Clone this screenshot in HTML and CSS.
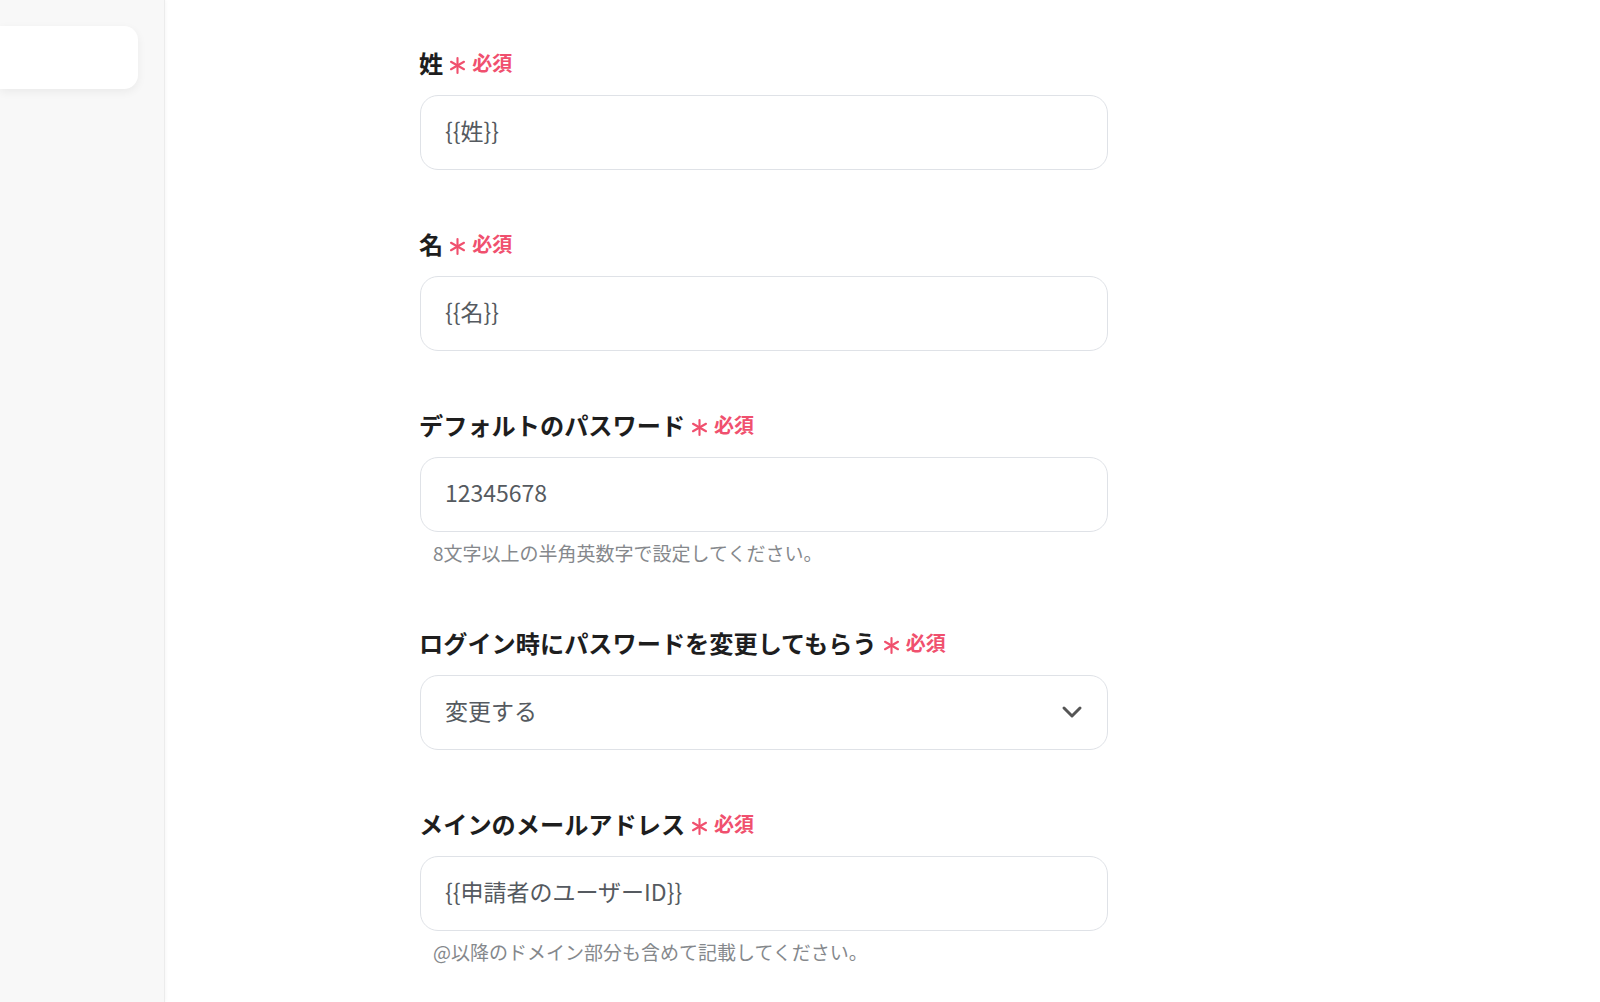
FILE: index.html
```html
<!DOCTYPE html>
<html lang="ja">
<head>
<meta charset="utf-8">
<link rel="stylesheet" href="styles.css">
</head>
<body>
<div class="app">
  <aside class="sidebar">
    <div class="side-card"></div>
  </aside>
  <main class="main">
    <form class="form">
      <div class="field">
        <div class="label">姓<span class="req"><svg class="ast" width="17" height="17" viewBox="0 0 16 16"><g stroke="#f0506e" stroke-width="2" stroke-linecap="round"><path d="M8 1 V15"/><path d="M1.9 4.5 L14.1 11.5"/><path d="M1.9 11.5 L14.1 4.5"/></g></svg>必須</span></div>
        <div class="input">{{姓}}</div>
      </div>
      <div class="field">
        <div class="label">名<span class="req"><svg class="ast" width="17" height="17" viewBox="0 0 16 16"><g stroke="#f0506e" stroke-width="2" stroke-linecap="round"><path d="M8 1 V15"/><path d="M1.9 4.5 L14.1 11.5"/><path d="M1.9 11.5 L14.1 4.5"/></g></svg>必須</span></div>
        <div class="input">{{名}}</div>
      </div>
      <div class="field">
        <div class="label">デフォルトのパスワード<span class="req"><svg class="ast" width="17" height="17" viewBox="0 0 16 16"><g stroke="#f0506e" stroke-width="2" stroke-linecap="round"><path d="M8 1 V15"/><path d="M1.9 4.5 L14.1 11.5"/><path d="M1.9 11.5 L14.1 4.5"/></g></svg>必須</span></div>
        <div class="input">12345678</div>
        <div class="help">8文字以上の半角英数字で設定してください。</div>
      </div>
      <div class="field">
        <div class="label">ログイン時にパスワードを変更してもらう<span class="req"><svg class="ast" width="17" height="17" viewBox="0 0 16 16"><g stroke="#f0506e" stroke-width="2" stroke-linecap="round"><path d="M8 1 V15"/><path d="M1.9 4.5 L14.1 11.5"/><path d="M1.9 11.5 L14.1 4.5"/></g></svg>必須</span></div>
        <div class="input select">
          <span>変更する</span>
          <svg class="chev" width="22" height="14" viewBox="0 0 22 14"><path d="M3 3 L11 11 L19 3" fill="none" stroke="#555" stroke-width="3" stroke-linecap="round" stroke-linejoin="round"/></svg>
        </div>
      </div>
      <div class="field">
        <div class="label">メインのメールアドレス<span class="req"><svg class="ast" width="17" height="17" viewBox="0 0 16 16"><g stroke="#f0506e" stroke-width="2" stroke-linecap="round"><path d="M8 1 V15"/><path d="M1.9 4.5 L14.1 11.5"/><path d="M1.9 11.5 L14.1 4.5"/></g></svg>必須</span></div>
        <div class="input">{{申請者のユーザーID}}</div>
        <div class="help">@以降のドメイン部分も含めて記載してください。</div>
      </div>
    </form>
  </main>
</div>
</body>
</html>
```

FILE: styles.css
```css
html, body {
  margin: 0;
  padding: 0;
  background: #ffffff;
  font-family: "Noto Sans CJK JP", "Noto Sans", sans-serif;
}
.app {
  display: flex;
  width: 1600px;
  height: 1002px;
  overflow: hidden;
}
.sidebar {
  width: 165px;
  flex: 0 0 165px;
  background: #f8f8f8;
  border-right: 1px solid #ececec;
  box-shadow: 1px 0 3px rgba(0,0,0,0.03);
  padding-top: 26px;
  box-sizing: border-box;
}
.side-card {
  width: 138px;
  height: 63px;
  background: #ffffff;
  border-radius: 0 14px 14px 0;
  box-shadow: 0 3px 10px rgba(0,0,0,0.06);
}
.main {
  flex: 1;
  padding: 46px 0 0 255px;
}
.form {
  width: 688px;
  display: flex;
  flex-direction: column;
}
.field {
  display: flex;
  flex-direction: column;
  margin-bottom: 57px;
}
.label {
  font-size: 24.2px;
  font-weight: 700;
  color: #1e1e1e;
  line-height: 33px;
  height: 33px;
  display: flex;
  align-items: center;
  margin-left: -1px;
}
.req {
  color: #f0506e;
  font-size: 20px;
  font-weight: 700;
  margin-left: 6px;
  display: inline-flex;
  align-items: center;
}
.ast {
  display: block;
  margin-right: 6px;
  position: relative;
  top: 3px;
}
.input {
  margin-top: 16px;
  height: 75px;
  box-sizing: border-box;
  border: 1.5px solid #dfe2e7;
  border-radius: 18px;
  padding: 0 24px 5px 24px;
  display: flex;
  align-items: center;
  font-size: 23px;
  color: #555a60;
}
.select {
  justify-content: space-between;
  padding-right: 24px;
}
.chev {
  display: block;
  position: relative;
  top: 2px;
}
.help {
  margin-top: 8px;
  padding-left: 13px;
  font-size: 19px;
  line-height: 26px;
  color: #85888c;
  margin-bottom: 3px;
}
```
